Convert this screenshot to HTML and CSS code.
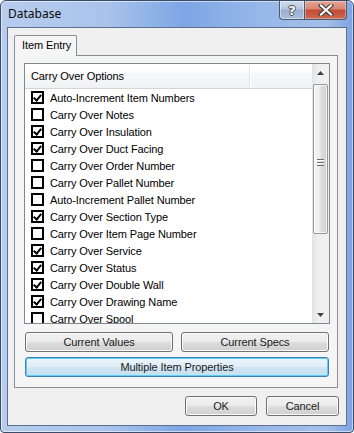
FILE: index.html
```html
<!DOCTYPE html>
<html>
<head>
<meta charset="utf-8">
<link rel="stylesheet" href="styles.css">
</head>
<body>
<div class="window">
  <div class="titlebar">
    <span class="title">Database</span>
    <div class="caption-btns">
      <div class="cbtn help"><span>?</span></div>
      <div class="cbtn close">
        <svg width="16" height="12" viewBox="0 0 16 12"><path d="M3 1.5 L13 10.5 M13 1.5 L3 10.5" stroke="#3b3b3b" stroke-width="4.2" stroke-linecap="square"/><path d="M3 1.5 L13 10.5 M13 1.5 L3 10.5" stroke="#ffffff" stroke-width="2.2" stroke-linecap="square"/></svg>
      </div>
    </div>
  </div>
  <div class="client">
    <div class="tabs"><div class="tab">Item Entry</div></div>
    <div class="tabpanel">
      <div class="listbox">
        <div class="list-main">
          <div class="header"><div class="col1">Carry Over Options</div><div class="col2"></div></div>
          <div class="rows">
            <div class="row"><span class="cb on"></span><span>Auto-Increment Item Numbers</span></div>
            <div class="row"><span class="cb"></span><span>Carry Over Notes</span></div>
            <div class="row"><span class="cb on"></span><span>Carry Over Insulation</span></div>
            <div class="row"><span class="cb on"></span><span>Carry Over Duct Facing</span></div>
            <div class="row"><span class="cb"></span><span>Carry Over Order Number</span></div>
            <div class="row"><span class="cb"></span><span>Carry Over Pallet Number</span></div>
            <div class="row"><span class="cb"></span><span>Auto-Increment Pallet Number</span></div>
            <div class="row"><span class="cb on"></span><span>Carry Over Section Type</span></div>
            <div class="row"><span class="cb"></span><span>Carry Over Item Page Number</span></div>
            <div class="row"><span class="cb on"></span><span>Carry Over Service</span></div>
            <div class="row"><span class="cb on"></span><span>Carry Over Status</span></div>
            <div class="row"><span class="cb on"></span><span>Carry Over Double Wall</span></div>
            <div class="row"><span class="cb on"></span><span>Carry Over Drawing Name</span></div>
            <div class="row"><span class="cb"></span><span>Carry Over Spool</span></div>
          </div>
        </div>
        <div class="scrollbar">
          <div class="sb-arrow"><svg width="7" height="4" viewBox="0 0 7 4"><path d="M0 4 L3.5 0 L7 4 Z" fill="#3f3f3f"/></svg></div>
          <div class="sb-track">
            <div class="sb-thumb"><div class="grip"></div></div>
          </div>
          <div class="sb-arrow"><svg width="7" height="4" viewBox="0 0 7 4"><path d="M0 0 L7 0 L3.5 4 Z" fill="#3f3f3f"/></svg></div>
        </div>
      </div>
      <div class="btn-row">
        <button class="btn half">Current Values</button>
        <button class="btn half">Current Specs</button>
      </div>
      <button class="btn wide default">Multiple Item Properties</button>
    </div>
    <div class="dialog-btns">
      <button class="btn ok">OK</button>
      <button class="btn cancel">Cancel</button>
    </div>
  </div>
</div>
</body>
</html>
```

FILE: styles.css
```css
* { box-sizing: border-box; }
html, body { margin: 0; padding: 0; background: #ffffff; }
body { font-family: "Liberation Sans", Arial, sans-serif; font-size: 11px; letter-spacing: -0.1px; color: #000; }

.window {
  width: 354px;
  height: 433px;
  border: 1px solid #3b4c68;
  border-radius: 6px 6px 4px 4px;
  background: linear-gradient(to right, #b7cdee 0%, #a9c3eb 30%, #7ea6e5 52%, #98b8e9 75%, #a4bfe9 92%, #7fa3e2 100%);
  box-shadow: inset 0 0 0 1px rgba(255,255,255,0.55);
  padding: 0 6px 6px 6px;
  display: flex;
  flex-direction: column;
  overflow: hidden;
}

.titlebar {
  height: 26px;
  display: flex;
  justify-content: space-between;
  align-items: flex-start;
  flex: none;
}
.title {
  font-family: "Noto Sans", "Open Sans", sans-serif;
  font-size: 12px;
  letter-spacing: 0;
  color: #0a0a0a;
  padding-left: 1px;
  margin-top: 5px;
  line-height: 16px;
}
.caption-btns { display: flex; }
.cbtn {
  height: 19px;
  border: 1px solid #4b5a74;
  border-top: none;
  display: flex;
  align-items: center;
  justify-content: center;
}
.help {
  width: 25px;
  border-radius: 0 0 0 4px;
  border-right: none;
  background: linear-gradient(to bottom, #d0dcee 0%, #b5c6e0 45%, #9aafd0 50%, #a9bfe0 100%);
  box-shadow: inset 0 0 0 1px rgba(255,255,255,0.45);
}
.help span {
  font-family: "DejaVu Sans", sans-serif;
  font-weight: bold;
  font-size: 13px;
  color: #ffffff;
  line-height: 13px;
  text-shadow: 1px 0 0 #4a4a4a, -1px 0 0 #4a4a4a, 0 1px 0 #4a4a4a, 0 -1px 0 #4a4a4a;
}
.close {
  width: 43px;
  border-radius: 0 0 4px 0;
  background: linear-gradient(to bottom, #e3a597 0%, #d98472 45%, #c34a33 50%, #cd6a52 100%);
  box-shadow: inset 0 0 0 1px rgba(255,255,255,0.35);
}

.client {
  flex: 1;
  border: 1px solid #5d6f8e;
  background: #f0f0f0;
  padding: 7px 8px 0 6px;
  display: flex;
  flex-direction: column;
}

.tabs { display: flex; height: 20px; position: relative; z-index: 1; }
.tab {
  width: 63px;
  height: 21px;
  border: 1px solid #898c95;
  border-bottom: none;
  border-radius: 2px 2px 0 0;
  background: #f5f5f5;
  padding-left: 7px;
  line-height: 19px;
}

.tabpanel {
  height: 333px;
  border: 1px solid #898c95;
  background: #f5f5f5;
  padding: 7px 7px 0 9px;
  display: flex;
  flex-direction: column;
}

.listbox {
  height: 261px;
  border: 1px solid #828790;
  background: #ffffff;
  display: flex;
  flex: none;
}
.list-main { flex: 1; display: flex; flex-direction: column; overflow: hidden; }
.header {
  height: 25px;
  display: flex;
  border-bottom: 1px solid #d5d5d5;
  background: linear-gradient(to bottom, #ffffff 0%, #ffffff 20%, #f6f7f8 45%, #f1f2f3 100%);
  flex: none;
}
.col1 {
  width: 225px;
  padding-left: 6px;
  line-height: 24px;
  border-right: 1px solid #e3e4e6;
}
.col2 { flex: 1; border-left: 1px solid #ffffff; }

.rows { flex: 1; overflow: hidden; }
.row {
  height: 17px;
  display: flex;
  align-items: center;
  padding-left: 6px;
  white-space: nowrap;
}
.cb {
  width: 13px;
  height: 13px;
  border: 2px solid #000;
  background: #fff;
  margin-right: 6px;
  flex: none;
  position: relative;
}
.cb.on::after {
  content: "";
  position: absolute;
  left: 2px;
  top: 0px;
  width: 3px;
  height: 6px;
  border-right: 2px solid #000;
  border-bottom: 2px solid #000;
  transform: rotate(40deg);
  transform-origin: 50% 50%;
}

.scrollbar {
  width: 17px;
  display: flex;
  flex-direction: column;
  background: linear-gradient(to right, #e3e3e3 0%, #f0f0f0 40%, #f0f0f0 100%);
  flex: none;
}
.sb-arrow {
  height: 17px;
  display: flex;
  align-items: center;
  justify-content: center;
  flex: none;
}
.sb-track { flex: 1; padding: 1px 1px 0 1px; }
.sb-thumb {
  height: 150px;
  border: 1px solid #979797;
  border-radius: 2px;
  background: linear-gradient(to right, #f5f5f5 0%, #ececec 45%, #dcdcdc 55%, #d1d1d1 100%);
  box-shadow: inset 0 0 0 1px rgba(255,255,255,0.7);
  display: flex;
  align-items: center;
  justify-content: center;
  margin-top: 2px;
}
.grip {
  width: 7px;
  height: 7px;
  background: repeating-linear-gradient(to bottom, #6e6e6e 0, #6e6e6e 1px, #ffffff 1px, #ffffff 2px, transparent 2px, transparent 3px);
  margin-top: 6px;
}

.btn {
  font: normal 400 11px/18px "Liberation Sans", Arial, sans-serif;
  letter-spacing: -0.1px;
  color: #1a1a1a;
  height: 20px;
  padding: 0;
  border: 1px solid #707070;
  border-radius: 3px;
  background: linear-gradient(to bottom, #f2f2f2 0%, #ebebeb 48%, #dddddd 52%, #cfcfcf 100%);
  box-shadow: inset 0 0 0 1px #fbfbfb;
}
.btn-row {
  display: flex;
  gap: 8px;
  margin-top: 8px;
  padding-left: 1px;
}
.half { width: 148px; }
.wide { width: 304px; margin-top: 5px; margin-left: 1px; }
.default {
  border-color: #3c7fb1;
  background: linear-gradient(to bottom, #ecf5fb 0%, #e0eef8 48%, #cfe5f3 52%, #c6dfef 100%);
  box-shadow: inset 0 0 0 1px #5fd0f5;
}

.dialog-btns {
  display: flex;
  justify-content: flex-end;
  gap: 9px;
  margin-top: 8px;
  margin-right: -1px;
}
.ok { width: 72px; }
.cancel { width: 73px; }
```
